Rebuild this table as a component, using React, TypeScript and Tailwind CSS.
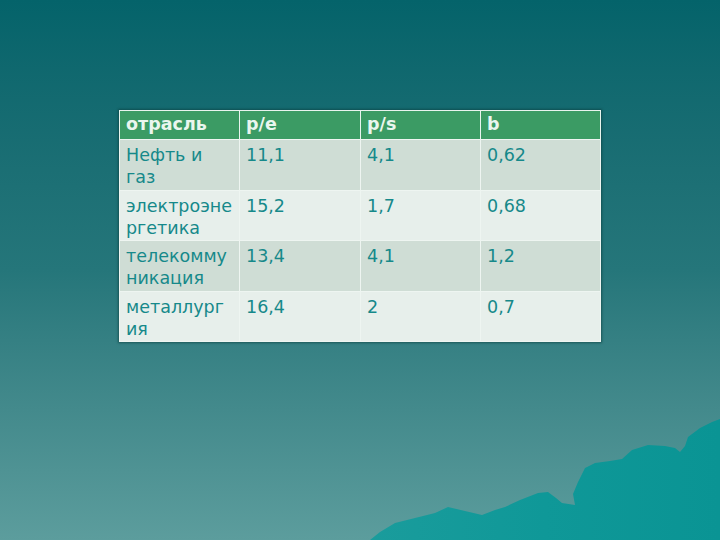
const rows = [
  ["Нефть и газ", "11,1", "4,1", "0,62"],
  ["электроэне ргетика", "15,2", "1,7", "0,68"],
  ["телекомму никация", "13,4", "4,1", "1,2"],
  ["металлург ия", "16,4", "2", "0,7"],
];

function Mountain() {
  return (
    <svg className="absolute bottom-0 left-0" width="720" height="540" viewBox="0 0 720 540">
      <defs>
        <linearGradient id="m" x1="0" y1="0" x2="1" y2="0">
          <stop offset="0" stopColor="#1a9c9c" />
          <stop offset="0.5" stopColor="#0f9898" />
          <stop offset="1" stopColor="#0a9494" />
        </linearGradient>
      </defs>
      <path
        d="M370 540 L380 532 L395 523 L415 518 L435 513 L448 507 L465 511 L482 515 L495 510 L505 507 L520 500 L538 493 L548 492 L556 498 L562 503 L575 505 L573 494 L578 482 L585 468 L595 463 L610 461 L622 459 L632 450 L648 445 L665 446 L675 448 L680 452 L685 446 L688 437 L700 428 L712 422 L720 419 L720 540 Z"
        fill="url(#m)"
      />
    </svg>
  );
}

export default function App() {
  return (
    <div
      className="relative w-[720px] h-[540px] overflow-hidden bg-gradient-to-b from-[#04636a] via-[#25767a] to-[#5c9d9d]"
      style={{ fontFamily: '"DejaVu Sans", Verdana, sans-serif' }}
    >
      <Mountain />
      <div className="relative pt-[110px] pl-[119px]">
        <table className="table-fixed border-collapse border border-[#e8f4ee] shadow-[0_0_2px_1px_rgba(10,60,60,0.6)] text-[17.5px] leading-[22px]">
          <thead>
            <tr className="bg-[#3b9b64]">
              {["отрасль", "p/e", "p/s", "b"].map((h, i) => (
                <th
                  key={h}
                  className={
                    "h-[29px] border-x border-[#e8f4ee] px-[6px] pt-[2px] text-left align-top font-bold text-[#eaf6ee] " +
                    (i === 1 ? "w-[121px]" : "w-[120px]")
                  }
                >
                  {h}
                </th>
              ))}
            </tr>
          </thead>
          <tbody>
            {rows.map((r, ri) => (
              <tr key={ri} className={ri % 2 === 0 ? "bg-[#cfddd5]" : "bg-[#e7efeb]"}>
                {r.map((c, ci) => (
                  <td
                    key={ci}
                    className="h-[50.5px] border border-[#eef5f1] px-[6px] pt-[4px] align-top text-[#16898a]"
                  >
                    {c}
                  </td>
                ))}
              </tr>
            ))}
          </tbody>
        </table>
      </div>
    </div>
  );
}
